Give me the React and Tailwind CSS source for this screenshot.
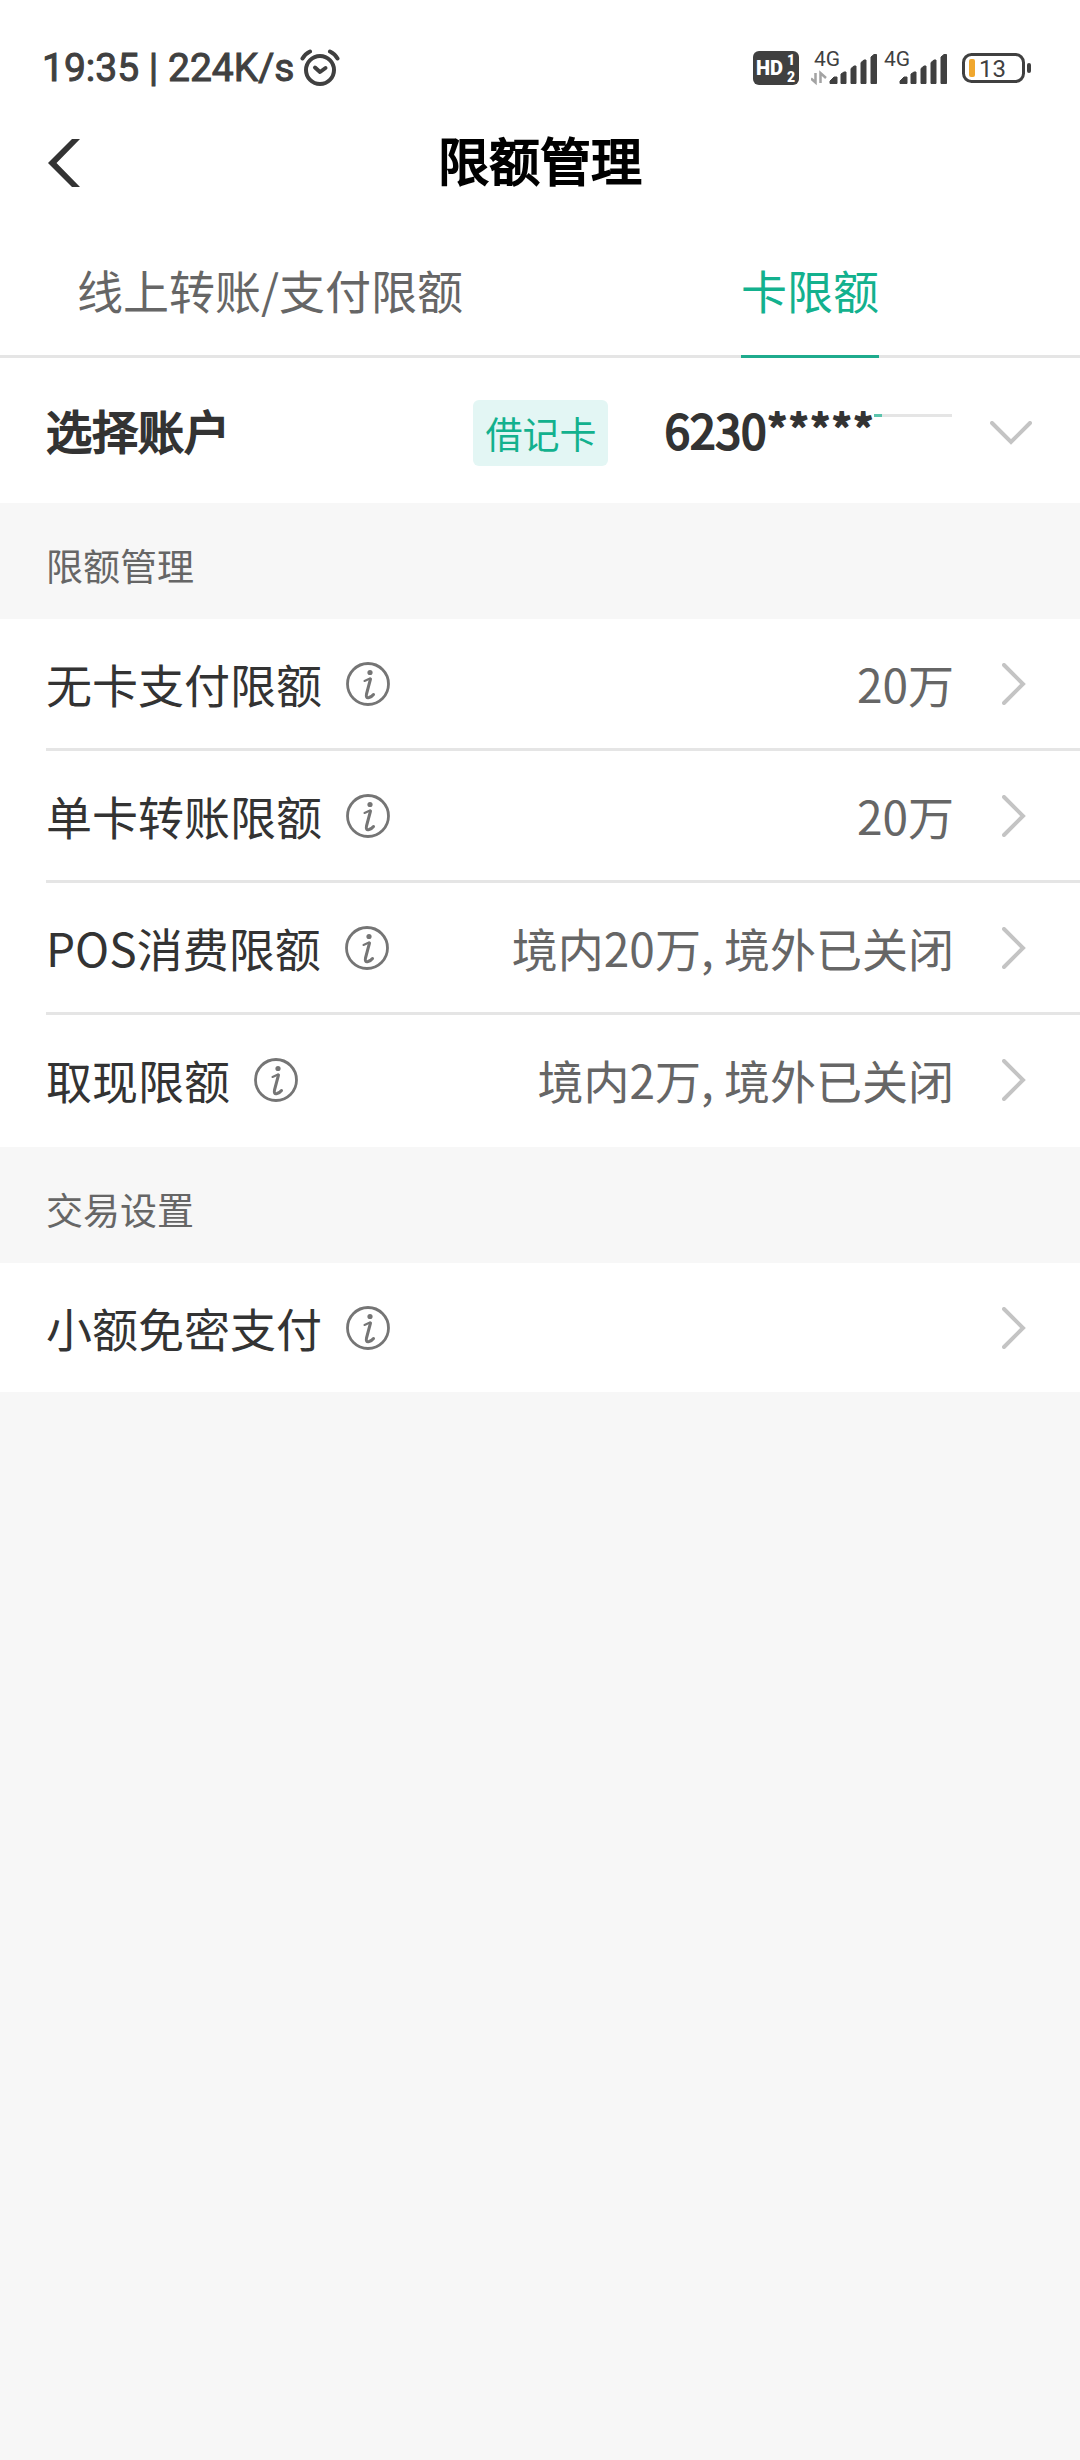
import React, { useState } from "react";

const limits = [
  { id: "cardless", name: "无卡支付限额", value: "20万" },
  { id: "transfer", name: "单卡转账限额", value: "20万" },
  { id: "pos", name: "POS消费限额", value: "境内20万, 境外已关闭" },
  { id: "cash", name: "取现限额", value: "境内2万, 境外已关闭" },
];

const settings = [{ id: "small", name: "小额免密支付", value: "" }];

const tabs = [
  { id: "online", name: "线上转账/支付限额" },
  { id: "card", name: "卡限额" },
];

const AlarmIcon = () => (
  <svg width="40" height="38" viewBox="0 0 40 38" fill="none" stroke="#404040">
    <circle cx="20" cy="21" r="14" strokeWidth="4" />
    <path d="M15 18.5l5 4.5 5.5-4" strokeWidth="4" strokeLinecap="round" strokeLinejoin="round" />
    <path d="M2.5 9.5Q5 5 10 2.5M30 2.5Q35 5 37.5 9.5" strokeWidth="4" strokeLinecap="round" />
  </svg>
);

const HdIcon = () => (
  <svg width="46" height="34" viewBox="0 0 46 34">
    <rect width="46" height="34" rx="6" fill="#404040" />
    <g fill="#fff" fontFamily="Roboto, sans-serif" fontWeight="900">
      <text x="3" y="24" fontSize="20">HD</text>
      <text x="34" y="14" fontSize="14">1</text>
      <text x="34" y="31" fontSize="14">2</text>
    </g>
  </svg>
);

const SignalIcon = ({ active }) => (
  <svg width="67" height="50" viewBox="0 -8 67 50">
    <text x="3" y="15" fontSize="21" fontFamily="Roboto, sans-serif" fill="#404040">
      4G
    </text>
    {active && (
      <path
        d="M4.5 22v9.5L0 27.5M9.5 32V22l5.5 5"
        fill="none"
        stroke="#a3a3a3"
        strokeWidth="2.5"
      />
    )}
    <g fill="#404040" stroke="#404040" strokeWidth="1" strokeLinejoin="round">
      <path d="M19 30l4-4h3v6.5h-7z" />
      <path d="M30 23l3-2h2v11.5h-5z" />
      <path d="M40 17.5l3-2.5h2v17.5h-5z" />
      <path d="M50 11.5l3-2.5h2v23.5h-5z" />
      <path d="M60 6l3-2.5h2.5v29h-5.5z" />
    </g>
  </svg>
);

const BatteryIcon = () => (
  <svg width="70" height="32" viewBox="0 0 70 32">
    <rect x="1.5" y="2.5" width="60" height="27" rx="8" fill="none" stroke="#404040" strokeWidth="3" />
    <rect x="65" y="11" width="4" height="10" rx="2" fill="#404040" />
    <rect x="7" y="7" width="6" height="18" rx="2" fill="#f0a72e" />
    <text x="17" y="25" fontSize="24" fontFamily="Roboto, sans-serif" fill="#404040">
      13
    </text>
  </svg>
);

const BackIcon = () => (
  <svg width="32" height="48" viewBox="0 0 32 48" fill="#333">
    <path d="M24 0h8L8.5 24 32 48h-8L0 24z" />
  </svg>
);

const InfoIcon = () => (
  <svg width="44" height="44" viewBox="0 0 44 44" fill="none" stroke="#757575">
    <circle cx="22" cy="22" r="20.5" strokeWidth="2.8" />
    <circle cx="24" cy="10.5" r="2.6" fill="#757575" stroke="none" />
    <path d="M18.5 19L24 16.5" strokeWidth="2" strokeLinecap="round" />
    <path
      d="M24.5 17L20.5 32Q19.5 36.5 23 35.5Q26 34.5 27.5 32.5"
      strokeWidth="3"
      strokeLinecap="round"
      strokeLinejoin="round"
    />
  </svg>
);

const ChevronRight = () => (
  <svg width="24" height="42" viewBox="0 0 24 42" fill="none" stroke="#c4c4c4" strokeWidth="4">
    <path d="M2 2l19 19L2 40" strokeLinecap="round" />
  </svg>
);

const ChevronDown = () => (
  <svg width="42" height="24" viewBox="0 0 42 24" fill="none" stroke="#c4c4c4" strokeWidth="4">
    <path d="M2 2l19 19L40 2" strokeLinecap="round" />
  </svg>
);

const StatusBar = () => (
  <div className="flex items-center justify-between pt-12 pl-[42px] pr-12 text-[#404040]">
    <div className="flex items-center gap-1.5 h-10">
      <span className="font-[Roboto,sans-serif] text-[39px] leading-10 whitespace-pre [-webkit-text-stroke:1px]">
        19:35 | 224K/s
      </span>
      <AlarmIcon />
    </div>
    <div className="flex items-center h-10">
      <HdIcon />
      <div className="flex pl-3 pr-3.5 gap-[3px]">
        <SignalIcon active />
        <SignalIcon />
      </div>
      <BatteryIcon />
    </div>
  </div>
);

const SectionTitle = ({ children }) => (
  <h2 className="pl-[46px] pt-[34px] pb-[26px] text-[37px] leading-[56px] text-[#666]">
    {children}
  </h2>
);

const SettingList = ({ items }) => (
  <ul className="bg-white pl-[46px] divide-y-[3px] divide-[#e5e5e5]">
    {items.map((item) => (
      <li
        key={item.id}
        className="flex items-center justify-between py-8 pr-[54px] text-[46px] leading-[65px]"
      >
        <div className="flex items-center gap-6">
          <span className="text-[#333]">{item.name}</span>
          <button type="button" aria-label={`${item.name}说明`}>
            <InfoIcon />
          </button>
        </div>
        <button
          type="button"
          aria-label={`${item.name} ${item.value}`}
          className="flex items-center gap-12 text-[#666]"
        >
          <span>{item.value}</span>
          <ChevronRight />
        </button>
      </li>
    ))}
  </ul>
);

const App = () => {
  const [activeTab, setActiveTab] = useState("card");

  return (
    <div
      lang="zh-CN"
      className="min-h-screen bg-[#f7f7f7] font-['Noto_Sans_CJK_SC',sans-serif]"
    >
      <header className="bg-white">
        <StatusBar />
        <div className="grid grid-cols-[1fr_auto_1fr] items-center h-[145px] px-12 pt-1">
          <button type="button" aria-label="返回" className="justify-self-start">
            <BackIcon />
          </button>
          <h1 className="pb-2 text-[51px] leading-[72px] text-black [-webkit-text-stroke:2px]">
            限额管理
          </h1>
        </div>
        <nav className="grid grid-cols-2 border-b-[3px] border-[#e5e5e5]">
          {tabs.map((tab) => (
            <button
              key={tab.id}
              type="button"
              onClick={() => setActiveTab(tab.id)}
              className={`justify-self-center -mb-[3px] pt-[22px] pb-8 text-[46px] leading-[68px] border-b-[3px] ${
                activeTab === tab.id
                  ? "text-[#13b18e] border-[#1fab8d]"
                  : "text-[#666] border-transparent"
              }`}
            >
              {tab.name}
            </button>
          ))}
        </nav>
      </header>

      <main>
        <button
          type="button"
          className="flex items-center w-full h-[145px] bg-white pl-[46px] pr-12 pt-1 text-[46px] leading-[66px] text-[#333]"
        >
          <span className="pb-2 [-webkit-text-stroke:2px]">选择账户</span>
          <span className="ml-auto rounded-md bg-[#e3f6f4] px-3 text-[37px] text-[#13b18e]">
            借记卡
          </span>
          <span className="flex ml-14 pb-2">
            <span className="[-webkit-text-stroke:2px]">6230*****</span>
            <span className="mt-[18px] h-[3px] w-2 bg-[#5cc4ad]" />
            <span className="mt-[18px] h-[3px] w-[70px] bg-[#e5e5e5]" />
          </span>
          <span className="ml-[38px]">
            <ChevronDown />
          </span>
        </button>

        <SectionTitle>限额管理</SectionTitle>
        <div className="bg-white pb-[3px]">
          <SettingList items={limits} />
        </div>

        <SectionTitle>交易设置</SectionTitle>
        <SettingList items={settings} />
      </main>
    </div>
  );
};

export default App;
